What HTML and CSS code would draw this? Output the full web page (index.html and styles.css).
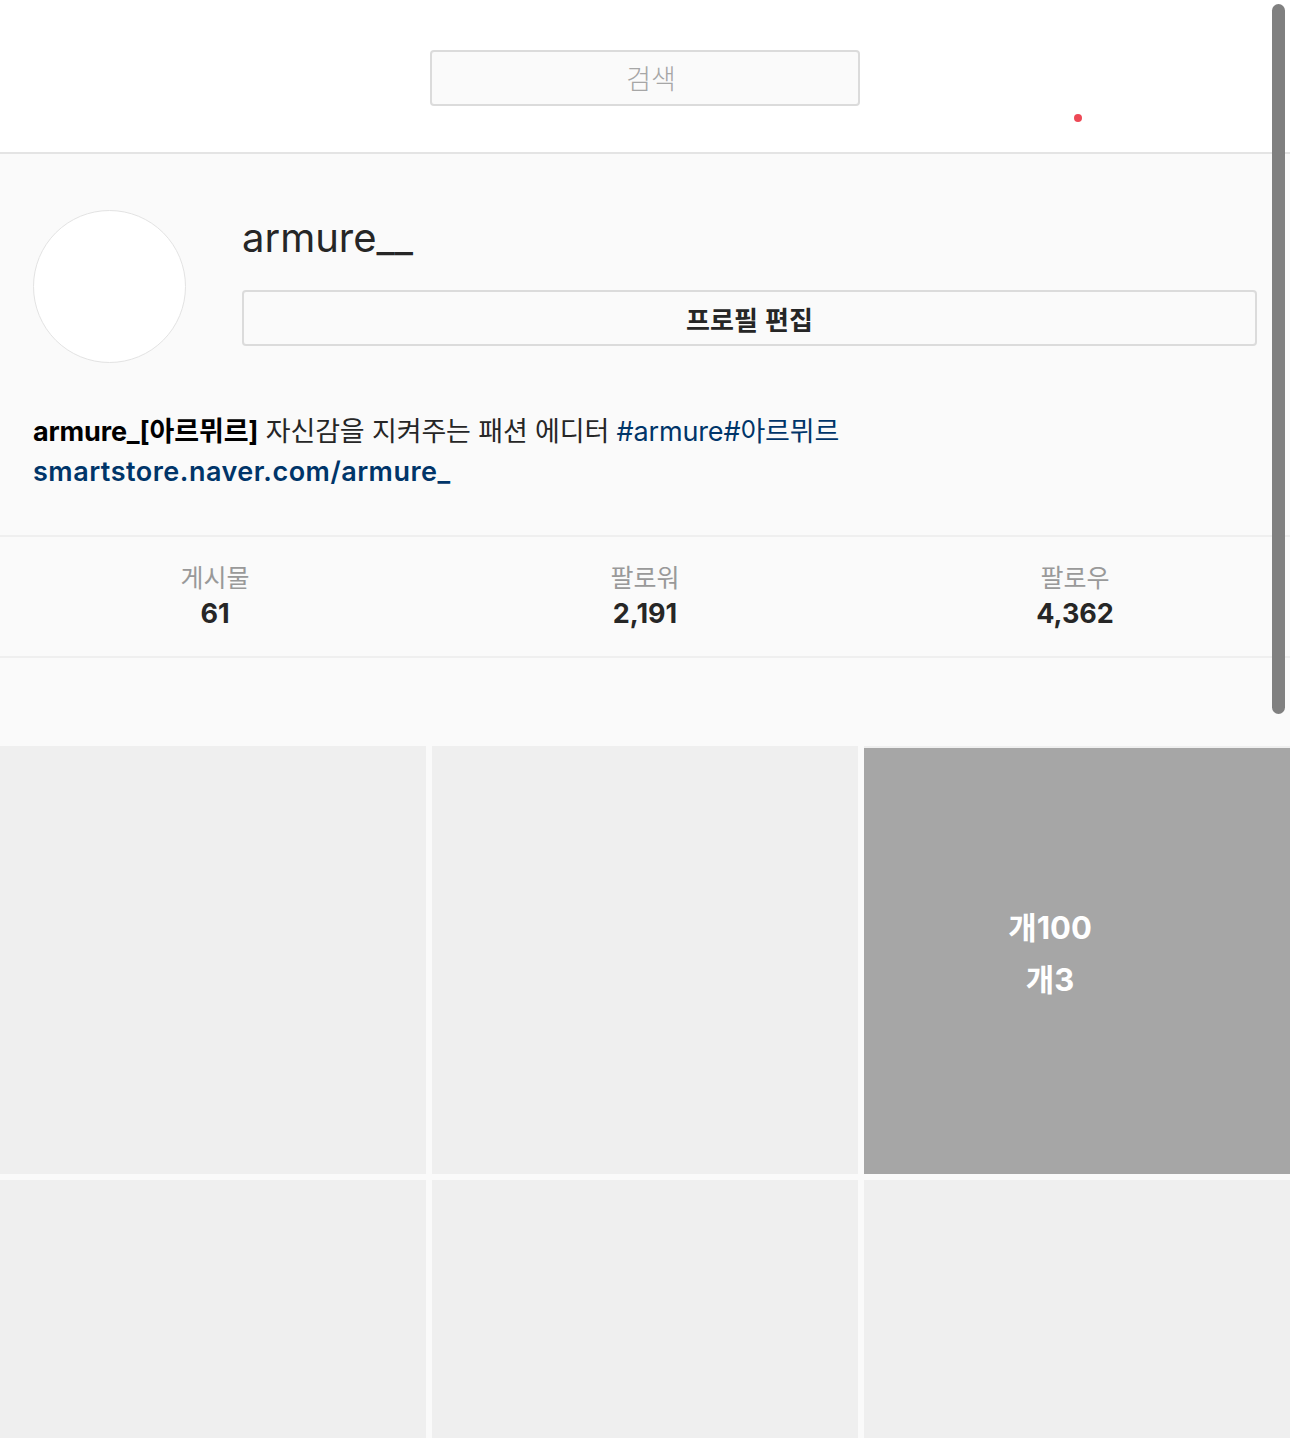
FILE: index.html
```html
<!DOCTYPE html>
<html lang="ko">
<head>
<meta charset="utf-8">
<title>armure__</title>
<link rel="stylesheet" href="styles.css">
</head>
<body>
<header class="topbar">
  <div class="search">검색</div>
  <span class="notice-dot"></span>
</header>

<section class="profile">
  <div class="profile-top">
    <div class="avatar"></div>
    <div class="profile-info">
      <h1 class="username">armure__</h1>
      <button class="edit-btn">프로필 편집</button>
    </div>
  </div>
  <div class="bio">
    <p class="bio-line bio-desc"><strong>armure_[아르뮈르]</strong> 자신감을 지켜주는 패션 에디터 <a class="tag">#armure#아르뮈르</a></p>
    <p class="bio-line"><a class="link">smartstore.naver.com/armure_</a></p>
  </div>
</section>

<ul class="stats">
  <li class="stat"><span class="stat-label">게시물</span><span class="stat-num">61</span></li>
  <li class="stat"><span class="stat-label">팔로워</span><span class="stat-num">2,191</span></li>
  <li class="stat"><span class="stat-label">팔로우</span><span class="stat-num">4,362</span></li>
</ul>

<div class="spacer"></div>

<div class="grid">
  <div class="cell"></div>
  <div class="cell"></div>
  <div class="cell"><div class="cell-multi"><span>개100</span><span>개3</span></div></div>
  <div class="cell"></div>
  <div class="cell"></div>
  <div class="cell"></div>
</div>

<div class="scrollbar"></div>
</body>
</html>
```

FILE: styles.css
```css
html, body {
  margin: 0;
  padding: 0;
  overflow: hidden;
  height: 1438px;
}
body {
  background: #fafafa;
  font-family: "Inter", "Noto Sans CJK KR", sans-serif;
  color: #262626;
  position: relative;
  width: 1290px;
}

.topbar {
  position: relative;
  height: 102px;
  background: #fff;
  border-bottom: 2px solid #e4e4e4;
  display: flex;
  justify-content: center;
  padding-top: 50px;
  box-sizing: content-box;
}
.search {
  width: 414px;
  height: 52px;
  padding-left: 12px;
  border: 2px solid #dbdbdb;
  border-radius: 4px;
  background: #fafafa;
  color: #a6a6a6;
  font-family: "Noto Sans CJK KR", sans-serif;
  font-size: 27px;
  font-weight: 300;
  line-height: 52px;
  text-align: center;
  box-sizing: content-box;
}
.notice-dot {
  position: absolute;
  left: 1074px;
  top: 114px;
  width: 8px;
  height: 8px;
  border-radius: 50%;
  background: #ed4956;
}

.profile {
  padding: 56px 33px 43px 33px;
}
.profile-top {
  display: flex;
  align-items: flex-start;
}
.avatar {
  width: 151px;
  height: 151px;
  flex: none;
  border-radius: 50%;
  background: #fff;
  border: 1px solid #e3e3e3;
  margin-right: 56px;
}
.profile-info {
  flex: 1;
  padding-top: 4px;
}
.username {
  margin: 0;
  font-size: 40px;
  font-weight: 400;
  line-height: 48px;
  color: #262626;
}
.edit-btn {
  display: block;
  width: 100%;
  margin-top: 28px;
  height: 56px;
  border: 2px solid #dbdbdb;
  border-radius: 4px;
  background: #fafafa;
  font-family: "Noto Sans CJK KR", sans-serif;
  font-size: 26px;
  font-weight: 700;
  color: #262626;
  padding: 0;
  cursor: pointer;
}

.bio {
  margin-top: 49px;
}
.bio-line {
  margin: 0;
  font-size: 27px;
  line-height: 40px;
  color: #262626;
}
.bio-desc {
  letter-spacing: -0.15px;
}
.bio-line strong {
  font-weight: 700;
  color: #000;
}
.tag, .link {
  color: #003569;
  text-decoration: none;
}
.link {
  font-weight: 600;
  letter-spacing: 0.5px;
}

.stats {
  list-style: none;
  margin: 0;
  padding: 0;
  display: grid;
  grid-template-columns: repeat(3, 1fr);
  border-top: 2px solid #efefef;
  border-bottom: 2px solid #efefef;
}
.stat {
  display: flex;
  flex-direction: column;
  align-items: center;
  padding: 21px 0 26px;
}
.stat-label {
  font-family: "Noto Sans CJK KR", sans-serif;
  font-size: 25px;
  line-height: 36px;
  color: #999;
}
.stat-num {
  font-size: 27px;
  font-weight: 700;
  line-height: 36px;
  margin-top: 2px;
  margin-bottom: -2px;
  color: #262626;
}

.spacer {
  height: 88px;
}

.grid {
  display: grid;
  grid-template-columns: repeat(3, 426px);
  grid-auto-rows: 428px;
  gap: 6px;
}
.cell {
  background: #efefef;
  padding-top: 2px;
  display: flex;
}
.cell-multi {
  flex: 1;
  background: #a6a6a6;
  color: #fff;
  display: flex;
  flex-direction: column;
  align-items: center;
  justify-content: center;
  padding-bottom: 14px;
  padding-right: 54px;
  font-size: 31px;
  font-weight: 700;
  line-height: 52px;
}

.scrollbar {
  position: absolute;
  left: 1272px;
  top: 4px;
  width: 13px;
  height: 710px;
  border-radius: 7px;
  background: #808080;
}
```
